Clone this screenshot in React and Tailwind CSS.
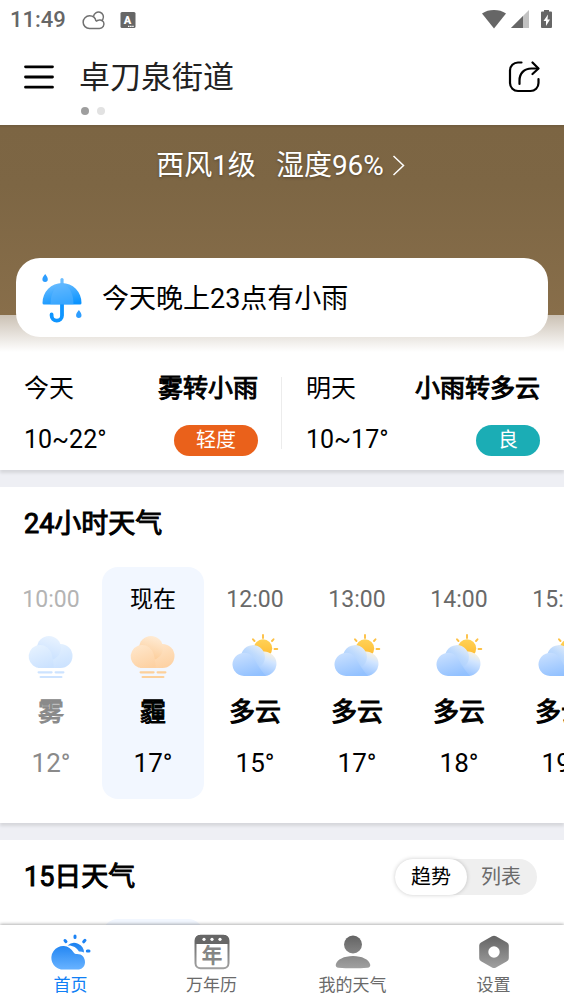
import { useState } from "react";
import clsx from "clsx";

const HOURS = [
  { time: "10:00", icon: "fog", text: "雾", temp: "12°", past: true },
  { time: "现在", icon: "haze", text: "霾", temp: "17°", now: true },
  { time: "12:00", icon: "cloudy", text: "多云", temp: "15°" },
  { time: "13:00", icon: "cloudy", text: "多云", temp: "17°" },
  { time: "14:00", icon: "cloudy", text: "多云", temp: "18°" },
  { time: "15:00", icon: "cloudy", text: "多云", temp: "19°" },
];

const DAYS = [
  { day: "今天", text: "雾转小雨", temp: "10~22°", air: "轻度", color: "bg-[#ea611b]" },
  { day: "明天", text: "小雨转多云", temp: "10~17°", air: "良", color: "bg-[#1badb5]" },
];

const TABS = [
  { label: "首页", Icon: HomeIcon },
  { label: "万年历", Icon: CalendarIcon },
  { label: "我的天气", Icon: PersonIcon },
  { label: "设置", Icon: SettingsIcon },
];

// Shared gradients, referenced by id from the icons below
function Gradients() {
  return (
    <svg width="0" height="0" className="absolute" aria-hidden="true">
      <defs>
        <linearGradient id="fogBack" x1="0.7" y1="0" x2="0.4" y2="1">
          <stop offset="0" stopColor="#e9f3ff" />
          <stop offset="1" stopColor="#c8e0ff" />
        </linearGradient>
        <linearGradient id="fogFront" x1="0.3" y1="0" x2="0.7" y2="1">
          <stop offset="0" stopColor="#e6f2ff" />
          <stop offset="1" stopColor="#cbe2ff" />
        </linearGradient>
        <linearGradient id="hazeBack" x1="0.7" y1="0" x2="0.4" y2="1">
          <stop offset="0" stopColor="#ffecd6" />
          <stop offset="1" stopColor="#fccb96" />
        </linearGradient>
        <linearGradient id="hazeFront" x1="0.3" y1="0" x2="0.7" y2="1">
          <stop offset="0" stopColor="#ffe6ca" />
          <stop offset="1" stopColor="#fdd1a2" />
        </linearGradient>
        <linearGradient id="cloudRight" x1="0.8" y1="0" x2="0.4" y2="1">
          <stop offset="0" stopColor="#fff4dc" />
          <stop offset="0.35" stopColor="#d3e6ff" />
          <stop offset="1" stopColor="#8ebeff" />
        </linearGradient>
        <linearGradient id="cloudTop" x1="0.9" y1="0" x2="0.3" y2="1">
          <stop offset="0" stopColor="#eaf0f6" />
          <stop offset="0.4" stopColor="#c0dbfd" />
          <stop offset="1" stopColor="#9ac6ff" />
        </linearGradient>
        <linearGradient id="cloudLeft" x1="0.2" y1="0" x2="0.6" y2="1">
          <stop offset="0" stopColor="#c9e0ff" />
          <stop offset="1" stopColor="#92c1ff" />
        </linearGradient>
        <linearGradient id="sun" x1="0" y1="0" x2="0" y2="1">
          <stop offset="0" stopColor="#ffd257" />
          <stop offset="1" stopColor="#ffb92e" />
        </linearGradient>
        <linearGradient id="umbrella" x1="0.3" y1="0" x2="0.7" y2="1">
          <stop offset="0" stopColor="#6bbdff" />
          <stop offset="1" stopColor="#0a93ff" />
        </linearGradient>
        <linearGradient id="blue" gradientUnits="userSpaceOnUse" x1="0" y1="4" x2="0" y2="34">
          <stop offset="0" stopColor="#0d78ee" />
          <stop offset="1" stopColor="#64b0ff" />
        </linearGradient>
        <linearGradient id="gray" gradientUnits="userSpaceOnUse" x1="0" y1="1" x2="0" y2="34">
          <stop offset="0" stopColor="#626262" />
          <stop offset="1" stopColor="#a0a0a0" />
        </linearGradient>
      </defs>
    </svg>
  );
}

function FogIcon({ haze }) {
  const back = haze ? "url(#hazeBack)" : "url(#fogBack)";
  const front = haze ? "url(#hazeFront)" : "url(#fogFront)";
  return (
    <svg width="50" height="50" viewBox="0 1 50 50" aria-hidden="true">
      <path d="M12 36h22.500a12 12 0 1 0 0-24h-6L12 24z" fill={front} />
      <circle cx="23" cy="16" r="12" fill={back} />
      <path d="M14.500 36a11.500 11.500 0 1 1 9.500-17.500c2.500 4 3 9 4 17.500z" fill={front} />
      <path
        d="M12.600 40.300h13M29.600 40.300h7.800M14.600 45h20.800"
        stroke={haze ? "#fcd09a" : "#cde3ff"}
        strokeWidth="2.200"
        strokeLinecap="round"
      />
    </svg>
  );
}

function CloudyIcon() {
  return (
    <svg width="50" height="50" viewBox="0 0 50 50" aria-hidden="true">
      <circle cx="33" cy="15.500" r="9.200" fill="url(#sun)" />
      <path
        d="M33 2v3M42 8l1.500-1.700M24.500 8L23 6.300M44.500 16h2.800"
        stroke="#fdc146"
        strokeWidth="1.900"
        strokeLinecap="round"
      />
      <path d="M18 43h16a12.200 12.200 0 1 0-7-22z" fill="url(#cloudRight)" />
      <path d="M11 23a12 12 0 1 1 21 9c-4 4-9 6-15 6z" fill="url(#cloudTop)" />
      <path d="M14 43a11.600 11.600 0 1 1 9-19c3 4 5 10 13 19z" fill="url(#cloudLeft)" />
    </svg>
  );
}

function UmbrellaIcon() {
  return (
    <svg width="40" height="50" viewBox="0 0 40 50" className="shrink-0" aria-hidden="true">
      <path d="M20 6.500v8" stroke="#6bbdff" strokeWidth="3.200" strokeLinecap="round" />
      <path
        d="M20 31v11.500a5.200 5.200 0 0 1-10.400 0v-1"
        fill="none"
        stroke="#0f95ff"
        strokeWidth="3.800"
        strokeLinecap="round"
      />
      <path d="M.5 30a19.500 20 0 0 1 39 0q0 1.500-1.500 1.500H2Q.5 31.500.5 30z" fill="url(#umbrella)" />
      <path d="M20 10C11 13.500 8.500 23 8.500 31.500h23C31.500 23 29 13.500 20 10z" fill="#5db5ff" opacity="0.500" />
      <path d="M3.200 1c1.500 2.300 2.600 3.600 2.600 5.200a2.700 2.700 0 0 1-5.400 0C.4 4.600 1.600 3.300 3.200 1z" fill="#2d9dff" />
      <path d="M36.900 37c1.500 2.300 2.600 3.600 2.600 5.200a2.700 2.700 0 0 1-5.400 0c0-1.600 1.200-2.900 2.800-5.200z" fill="#2d9dff" />
    </svg>
  );
}

function HomeIcon() {
  return (
    <svg width="44" height="36" viewBox="0 0 44 36" aria-hidden="true">
      <path
        d="M26 2v1.500M16 6.500l1 1.200M36 6.300l-1.300 1.500M38.300 17h1.700"
        stroke="#1c83f5"
        strokeWidth="3"
        strokeLinecap="round"
      />
      <path d="M18.500 11.500a9.800 9.800 0 0 1 16.500 7c-1.500-.8-3-1.200-5-1.100-2.400-4-6.500-6.300-11.500-5.900z" fill="url(#blue)" />
      <path d="M12 35.500a11.800 11.800 0 1 1 12.500-17.300c1.200 1.500 1.800 1.800 3.500 1.800 5 0 8 3.500 8 8.200 0 4.500-3.200 7.300-7.500 7.300z" fill="url(#blue)" />
    </svg>
  );
}

function CalendarIcon() {
  return (
    <svg width="36" height="36" viewBox="0 0 36 36" aria-hidden="true">
      <rect x="1.500" y="1.800" width="33" height="32.500" rx="5" fill="none" stroke="url(#gray)" strokeWidth="2" />
      <path d="M1 10V6a5 5 0 0 1 5-5h24a5 5 0 0 1 5 5v4z" fill="#666" />
      <circle cx="10" cy="5.300" r="1.600" fill="#fff" />
      <circle cx="18" cy="5.300" r="1.600" fill="#fff" />
      <circle cx="26" cy="5.300" r="1.600" fill="#fff" />
      <text x="18" y="29" textAnchor="middle" fontSize="20" fill="#858585" stroke="#858585" strokeWidth="1">
        年
      </text>
    </svg>
  );
}

function PersonIcon() {
  return (
    <svg width="36" height="36" viewBox="0 0 36 36" aria-hidden="true">
      <circle cx="18" cy="10.500" r="9" fill="url(#gray)" />
      <path d="M.8 30.500C2 25.500 9 22 18 22s16 3.500 17.200 8.500c.4 2-.7 3-2.700 3.200-9 .8-20 .8-29 0-2-.2-3.100-1.200-2.700-3.200z" fill="url(#gray)" />
    </svg>
  );
}

function SettingsIcon() {
  return (
    <svg width="36" height="36" viewBox="0 0 36 36" aria-hidden="true">
      <path
        fillRule="evenodd"
        d="M16 2.300a4 4 0 0 1 4 0l11 6.200a3.500 3.500 0 0 1 1.800 3v12.800a3.500 3.500 0 0 1-1.800 3L20 33.500a4 4 0 0 1-4 0L5 27.300a3.500 3.500 0 0 1-1.800-3V11.500a3.500 3.500 0 0 1 1.800-3zM18 12.300a5.700 5.700 0 1 0 0 11.400 5.700 5.700 0 0 0 0-11.400z"
        fill="url(#gray)"
      />
    </svg>
  );
}

function HourIcon({ name }) {
  if (name === "cloudy") return <CloudyIcon />;
  return <FogIcon haze={name === "haze"} />;
}

function StatusBar() {
  return (
    <div className="flex h-10 items-center px-2.5 text-[#666]">
      <span className="text-[22px] leading-10 font-medium">11:49</span>
      <svg width="24" height="20" viewBox="0 0 24 20" className="ml-4" fill="none" stroke="#707070" strokeWidth="1.500" aria-hidden="true">
        <path d="M7.500 18.500a6.300 6.300 0 0 1 0-12.700c3.500 0 6 2.200 6.500 5.400M7.500 18.500h10a4.500 4.500 0 0 0 4-6.500c-.8-1.500-2.500-2.300-4.300-2-1.200.1-2.300.6-3.200 1.500" />
        <path d="M11.500 6.300a5 5 0 1 1 9.300 3.200c-.4.700-.8 1-1.300 1.400" />
      </svg>
      <svg width="16" height="18" viewBox="0 0 16 18" className="ml-3.5" aria-hidden="true">
        <rect x="0.500" y="1" width="15" height="16" rx="1.500" fill="#666" />
        <text x="7.500" y="12.500" textAnchor="middle" fontSize="11" fontWeight="900" fill="#fff">
          A
        </text>
        <path d="M8 15.300h6" stroke="#fff" strokeWidth="1.200" strokeDasharray="1.500 0.600" />
      </svg>
      <div className="ml-auto flex items-center">
        <svg width="24" height="20" viewBox="0 0 24 20" fill="#666" aria-hidden="true">
          <path d="M0 3.500C3.500 1 7.500 0 12 0s8.500 1 12 3.500L12 18.500z" />
        </svg>
        <svg width="20" height="20" viewBox="0 0 20 20" className="ml-1" aria-hidden="true">
          <path d="M19 0v18H1z" fill="#c2c2c2" />
          <path d="M13 6v12H1z" fill="#666" />
        </svg>
        <svg width="14" height="20" viewBox="0 0 14 20" className="ml-2.5" aria-hidden="true">
          <path d="M1 2.500q0-1 1-1h2V0h5v1.500h2q1 0 1 1V17q0 1-1 1H2q-1 0-1-1z" fill="#666" />
          <path d="M8 4.500L3.500 11H6v5l4-6.500H7.500z" fill="#fff" />
        </svg>
      </div>
    </div>
  );
}

function Header() {
  return (
    <header className="shrink-0 bg-white">
      <StatusBar />
      <div className="flex h-[85px] px-6 pt-[18px]">
        <button type="button" aria-label="菜单" className="h-[38px]">
          <svg width="30" height="26" viewBox="0 0 30 26" stroke="#000" strokeWidth="2.800" strokeLinecap="round" aria-hidden="true">
            <path d="M1.500 2.800h27M1.500 13h27M1.500 23.200h27" />
          </svg>
        </button>
        <div className="ml-[25px]">
          <h1 className="text-[31px] leading-10 text-[#222]">卓刀泉街道</h1>
          <div className="mt-[9px] ml-0.5 flex gap-2">
            <span className="h-2 w-2 rounded-full bg-[#9e9e9e]" />
            <span className="h-2 w-2 rounded-full bg-[#e2e2e2]" />
          </div>
        </div>
        <button type="button" aria-label="分享" className="ml-auto h-[38px]">
          <svg width="32" height="32" viewBox="0 0 32 32" fill="none" stroke="#000" strokeWidth="2.200" strokeLinecap="round" strokeLinejoin="round" aria-hidden="true">
            <path d="M13.500 1.500H10a8 8 0 0 0-8 8V22a8 8 0 0 0 8 8h12.500a8 8 0 0 0 8-8v-4" />
            <path d="M11.500 23v-3.500c0-7 4.500-12 12-12H30" />
            <path d="M24.500 1.500l6 6-6 5.500" />
          </svg>
        </button>
      </div>
    </header>
  );
}

export default function App() {
  const [view, setView] = useState("趋势");
  const [tab, setTab] = useState("首页");

  return (
    <div className="flex h-screen flex-col overflow-hidden bg-[#eeeff4] font-['Roboto','Noto_Sans_CJK_SC',sans-serif] text-black">
      <Gradients />
      <Header />

      <main className="min-h-0 flex-1 overflow-hidden">
        <section className="bg-[linear-gradient(#6f5b3d_0px,#7c6543_3px,#7d6644_60px,#886e4a_190px,#cbc1b4_190px,#fff_227px)] px-4 pt-[21px] pb-[15px]">
          <a href="#wind" className="flex items-center justify-center text-[28px] leading-10 text-white [text-shadow:0_1px_3px_rgb(0_0_0/0.3)]">
            <span>西风1级</span>
            <span className="ml-5">湿度96%</span>
            <svg width="16" height="22" viewBox="0 0 16 22" className="ml-2" fill="none" stroke="#fff" strokeWidth="1.500" aria-hidden="true">
              <path d="M1.500 1l10 9.500-10 9.500" />
            </svg>
          </a>
          <div className="mt-[72px] flex h-[79px] items-center gap-5 rounded-3xl bg-white px-[26px]">
            <UmbrellaIcon />
            <p className="pt-0.5 text-[27px] leading-10">今天晚上23点有小雨</p>
          </div>
        </section>

        <section className="grid grid-cols-2 bg-white pt-[21px] pb-4 shadow-[0_3px_3px_rgb(0_0_0/0.1)]">
          {DAYS.map((d, i) => (
            <div key={d.day} className="relative h-[81px] px-6 text-[25px]">
              <div className="flex items-center justify-between leading-8">
                <span>{d.day}</span>
                <span className="[-webkit-text-stroke:1px]">{d.text}</span>
              </div>
              <div className="mt-[19px] flex items-center justify-between leading-8">
                <span>{d.temp}</span>
                <span className={clsx("rounded-full px-[22px] text-[20px] leading-[31px] text-white", d.color)}>
                  {d.air}
                </span>
              </div>
              {i > 0 && <span className="absolute top-1 -left-px h-[72px] w-px bg-[#ececec]" />}
            </div>
          ))}
        </section>

        <section className="mt-[17px] bg-white pt-[17px] pb-6 shadow-[0_3px_3px_rgb(0_0_0/0.1)]">
          <h2 className="px-6 text-[27px] leading-10 [-webkit-text-stroke:1px]">24小时天气</h2>
          <ul className="mt-[23px] flex overflow-x-auto [scrollbar-width:none]">
            {HOURS.map((h) => (
              <li
                key={h.time}
                className={clsx(
                  "flex w-[102px] shrink-0 flex-col items-center rounded-2xl pt-4 pb-[18px]",
                  h.now && "bg-[#f2f7ff]",
                )}
              >
                <span
                  className={clsx(
                    "text-[23px] leading-[34px]",
                    h.past ? "text-[#b4b4b4]" : h.now ? "text-black" : "text-[#696969]",
                  )}
                >
                  {h.time}
                </span>
                <span className="mt-4">
                  <HourIcon name={h.icon} />
                </span>
                <span
                  className={clsx(
                    "mt-[11px] text-[26px] leading-9 [-webkit-text-stroke:1px]",
                    h.past && "text-[#8a8a8a]",
                  )}
                >
                  {h.text}
                </span>
                <span className={clsx("mt-[15px] text-[26px] leading-9", h.past && "text-[#8a8a8a]")}>{h.temp}</span>
              </li>
            ))}
          </ul>
        </section>

        <section className="mt-[17px] bg-white pt-[17px]">
          <div className="flex items-center justify-between pr-[27px] pl-6">
            <h2 className="text-[27px] leading-10 [-webkit-text-stroke:1px]">15日天气</h2>
            <div className="flex rounded-full bg-[#efefef]">
              {["趋势", "列表"].map((v) => (
                <button
                  key={v}
                  type="button"
                  aria-pressed={view === v}
                  onClick={() => setView(v)}
                  className={clsx(
                    "rounded-full text-[20px] leading-9",
                    view === v
                      ? "bg-white px-4 text-black shadow-[0_0_4px_rgb(0_0_0/0.2)]"
                      : "pr-4 pl-3.5 text-[#6a6a6a]",
                  )}
                >
                  {v}
                </button>
              ))}
            </div>
          </div>
          <div className="mt-[22px] ml-[102px] h-[300px] w-[102px] rounded-2xl bg-[#f2f7ff]" />
        </section>
      </main>

      <nav className="relative grid shrink-0 grid-cols-4 bg-white pt-[9px] pb-1 shadow-[0_-1px_3px_rgb(0_0_0/0.3)]">
        {TABS.map(({ label, Icon }) => (
          <button
            key={label}
            type="button"
            onClick={() => setTab(label)}
            className={clsx(
              "flex flex-col items-center text-[17px] leading-[30px]",
              tab === label ? "text-[#1080f5]" : "text-[#6a6a6a]",
            )}
          >
            <Icon />
            <span>{label}</span>
          </button>
        ))}
      </nav>
    </div>
  );
}
